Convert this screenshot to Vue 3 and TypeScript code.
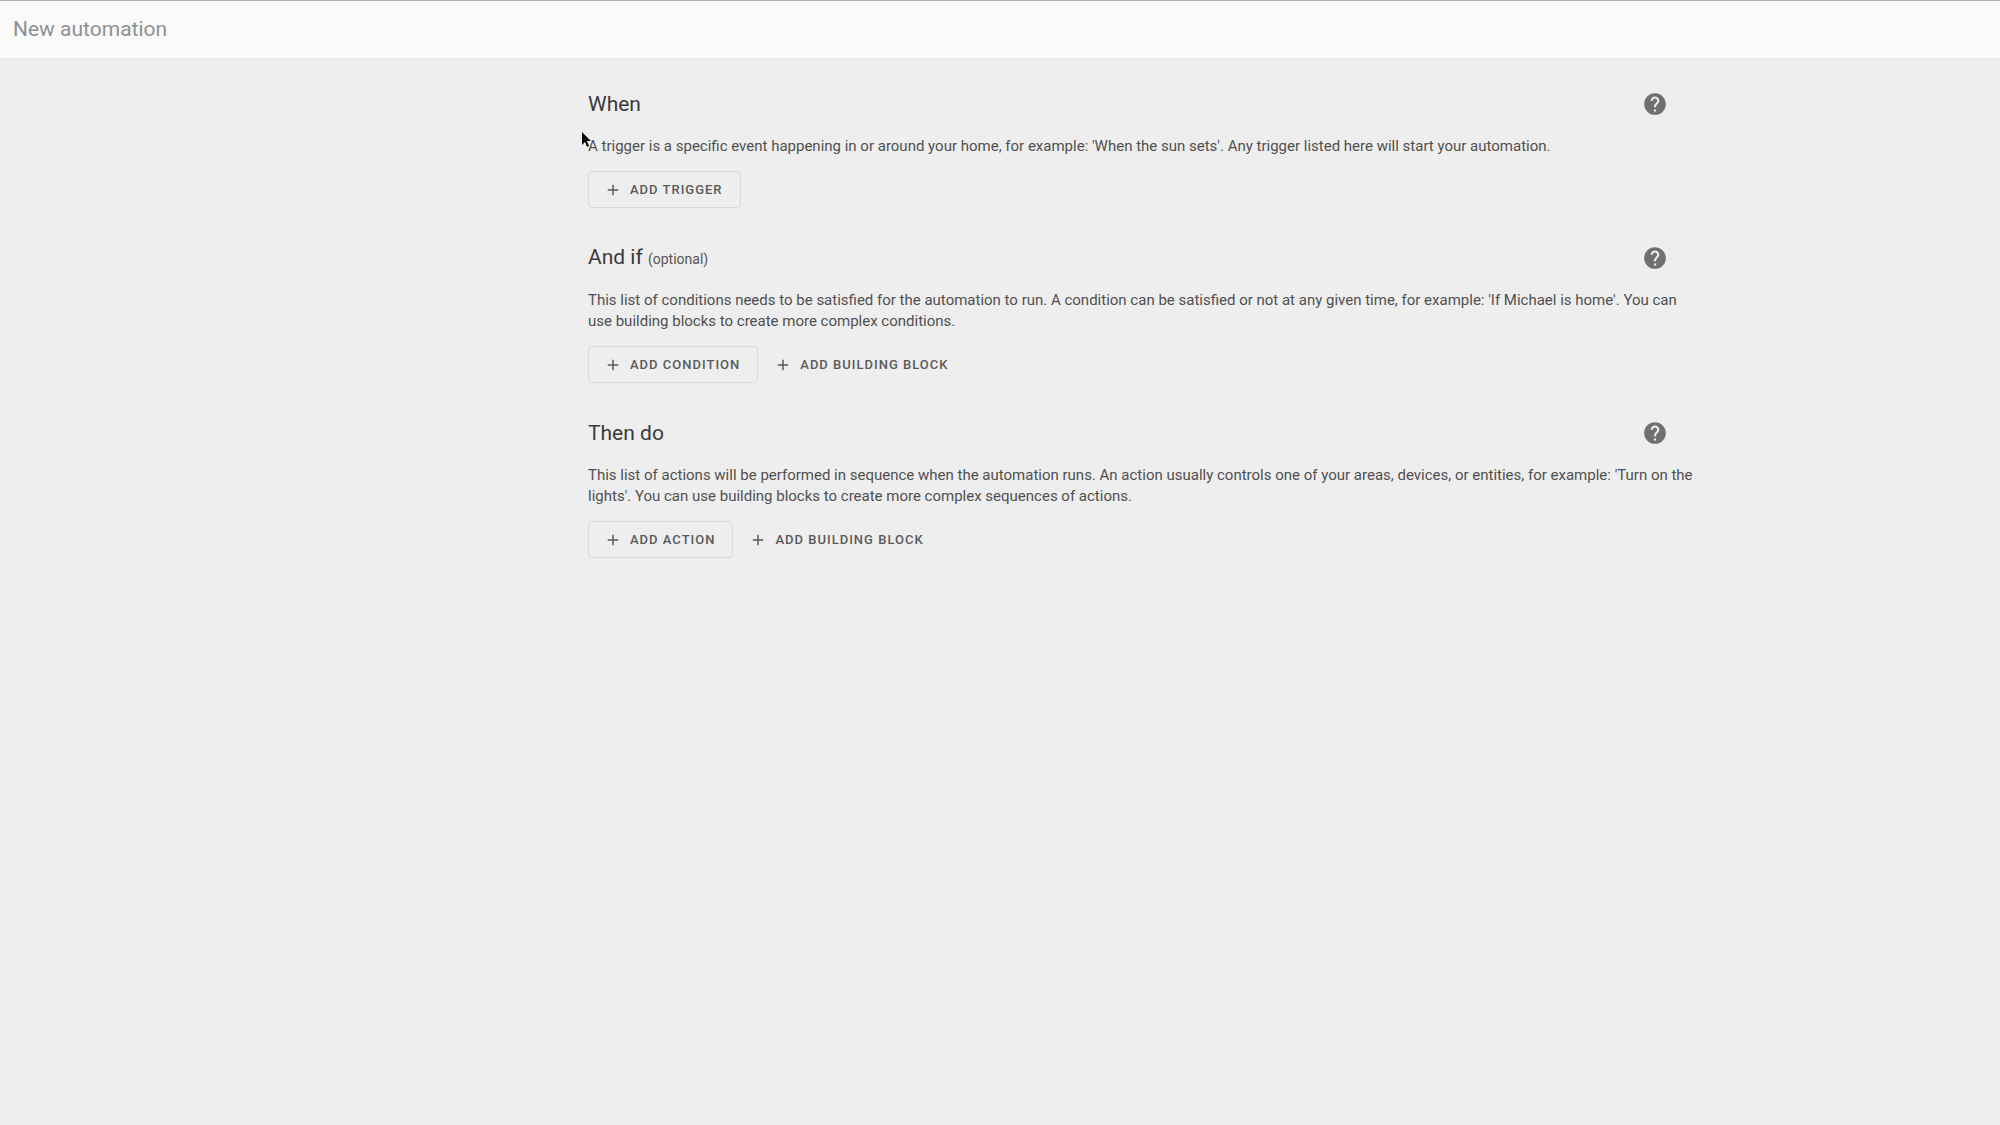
<script setup lang="ts">
interface Action {
  label: string
  outlined: boolean
}

interface Section {
  id: string
  title: string
  note?: string
  description: string
  actions: Action[]
}

const sections: Section[] = [
  {
    id: 'triggers',
    title: 'When',
    description:
      "A trigger is a specific event happening in or around your home, for example: 'When the sun sets'. Any trigger listed here will start your automation.",
    actions: [{ label: 'Add trigger', outlined: true }],
  },
  {
    id: 'conditions',
    title: 'And if',
    note: '(optional)',
    description:
      "This list of conditions needs to be satisfied for the automation to run. A condition can be satisfied or not at any given time, for example: 'If Michael is home'. You can use building blocks to create more complex conditions.",
    actions: [
      { label: 'Add condition', outlined: true },
      { label: 'Add building block', outlined: false },
    ],
  },
  {
    id: 'actions',
    title: 'Then do',
    description:
      "This list of actions will be performed in sequence when the automation runs. An action usually controls one of your areas, devices, or entities, for example: 'Turn on the lights'. You can use building blocks to create more complex sequences of actions.",
    actions: [
      { label: 'Add action', outlined: true },
      { label: 'Add building block', outlined: false },
    ],
  },
]
</script>

<template>
  <div class="page">
    <header class="toolbar">
      <h1 class="toolbar-title">New automation</h1>
    </header>

    <main class="content">
      <section v-for="section in sections" :key="section.id" class="section" :aria-labelledby="section.id">
        <div class="section-head">
          <h2 :id="section.id" class="section-title">
            {{ section.title }} <span v-if="section.note" class="note">{{ section.note }}</span>
          </h2>
          <button type="button" class="help" aria-label="Help">
            <svg viewBox="0 0 24 24" class="help-icon" aria-hidden="true">
              <path
                d="M15.07,11.25L14.17,12.17C13.45,12.89 13,13.5 13,15H11V14.5C11,13.39 11.45,12.39 12.17,11.67L13.41,10.41C13.78,10.05 14,9.55 14,9C14,7.89 13.1,7 12,7A2,2 0 0,0 10,9H8A4,4 0 0,1 12,5A4,4 0 0,1 16,9C16,9.88 15.64,10.67 15.07,11.25M13,19H11V17H13M12,2A10,10 0 0,0 2,12A10,10 0 0,0 12,22A10,10 0 0,0 22,12C22,6.47 17.5,2 12,2Z"
              />
            </svg>
          </button>
        </div>
        <p class="description">{{ section.description }}</p>
        <div class="actions">
          <button
            v-for="action in section.actions"
            :key="action.label"
            type="button"
            class="action"
            :class="{ outlined: action.outlined }"
          >
            <svg viewBox="0 0 24 24" class="plus" aria-hidden="true">
              <path d="M19,13H13V19H11V13H5V11H11V5H13V11H19V13Z" />
            </svg>
            {{ action.label }}
          </button>
        </div>
      </section>
    </main>

    <div class="player" aria-hidden="true">
      <svg viewBox="0 0 357 55" class="player-art">
        <path d="M8 17h3l5-5v10l-5-5zM171 6l18 10-18 11zM297 9h8l8 13h-11z" />
        <circle cx="88" cy="17" r="6" />
        <path d="M84 41h55v2h-55zM138 37h3v11h-3z" />
      </svg>
    </div>

    <svg class="pointer" viewBox="0 0 12 18" aria-hidden="true">
      <path d="M1 1V14L4 11L6 16L8 15L6 10H10Z" />
    </svg>
  </div>
</template>

<style>
body {
  margin: 0;
  background: #eee;
}
</style>

<style scoped>
.page {
  position: relative;
  min-height: 100vh;
  font-family: Roboto, "Liberation Sans", sans-serif;
  color: #3a3a3a;
  background: #eee;
}

.toolbar {
  display: flex;
  align-items: center;
  box-sizing: border-box;
  height: 59px;
  padding: 0 13px 2px;
  border-top: 1px solid #b0b0b0;
  border-bottom: 1px solid #e4e4e4;
  background: #fafafa;
}

.toolbar-title {
  margin: 0;
  font-size: 21px;
  font-weight: 400;
  line-height: 28px;
  color: #8e9092;
}

.content {
  display: flex;
  flex-direction: column;
  gap: 25px;
  max-width: 1092px;
  margin: 0 auto;
  padding: 20px 0 25px 268px;
}

.section-head {
  display: flex;
  align-items: center;
  justify-content: space-between;
}

.section-title {
  margin: 0;
  font-size: 21px;
  font-weight: 400;
  line-height: 28px;
}

.note {
  font-size: 14px;
  color: #555;
}

.help {
  display: flex;
  padding: 12px;
  border: 0;
  background: none;
}

.help-icon {
  width: 26px;
  height: 26px;
  fill: #707070;
}

/* Copy runs slightly past the column edge, under the help button's padding. */
.description {
  margin: 7px -16px 14px 0;
  font-size: 15px;
  line-height: 21px;
  color: #505050;
}

.actions {
  display: flex;
}

.action {
  display: flex;
  align-items: center;
  gap: 8px;
  height: 37px;
  padding: 0 17px 0 15px;
  border: 1px solid transparent;
  border-radius: 4px;
  background: none;
  font-family: inherit;
  font-size: 13px;
  font-weight: 500;
  letter-spacing: 1px;
  text-transform: uppercase;
  color: #5a5a5a;
}

.outlined {
  border-color: #d9d9d9;
}

.plus {
  width: 18px;
  height: 18px;
  fill: #5a5a5a;
}

.player {
  position: absolute;
  top: 890px;
  left: 50%;
  width: 357px;
  height: 55px;
  border-radius: 6px;
  background: #ededed;
  transform: translateX(-50%);
}

.player-art {
  display: block;
  fill: #eee;
}

.pointer {
  position: absolute;
  top: 131px;
  left: 581px;
  width: 12px;
  height: 18px;
  fill: #0a0a0a;
  stroke: #fff;
  stroke-width: 1;
  paint-order: stroke;
}
</style>
